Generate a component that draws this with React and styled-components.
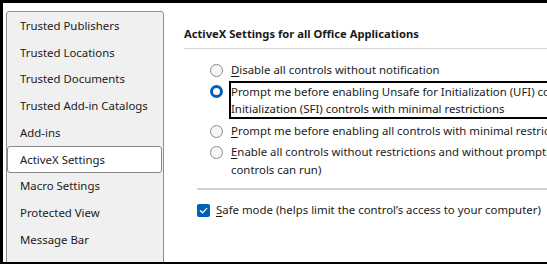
import styled, { createGlobalStyle } from "styled-components";

const GlobalStyle = createGlobalStyle`
  html, body {
    margin: 0;
    padding: 0;
    background: #000;
  }
  body {
    font-family: "Noto Sans", "Open Sans", sans-serif;
    color: #1a1a1a;
  }
`;

const navItems = [
  "Trusted Publishers",
  "Trusted Locations",
  "Trusted Documents",
  "Trusted Add-in Catalogs",
  "Add-ins",
  "ActiveX Settings",
  "Macro Settings",
  "Protected View",
  "Message Bar",
];

const options = [
  { key: "D", rest: "isable all controls without notification" },
  {
    lines: [
      "Prompt me before enabling Unsafe for Initialization (UFI) controls and Safe for",
      "Initialization (SFI) controls with minimal restrictions",
    ],
    checked: true,
  },
  { key: "P", rest: "rompt me before enabling all controls with minimal restrictions" },
  {
    key: "E",
    rest: "nable all controls without restrictions and without prompting (not recommended; potentially dangerous",
    tail: "controls can run)",
  },
];

function App() {
  return (
    <>
      <GlobalStyle />
      <Frame>
        <Window>
          <Sidebar>
            {navItems.map((item) => (
              <NavItem key={item} $active={item === "ActiveX Settings"}>
                {item}
              </NavItem>
            ))}
          </Sidebar>
          <Content>
            <Heading>ActiveX Settings for all Office Applications</Heading>
            <Rule />
            <OptionList>
              {options.map((opt, i) => (
                <Option key={i}>
                  <Radio $checked={opt.checked} />
                  {opt.lines ? (
                    <FocusLabel>
                      {opt.lines[0]}
                      <br />
                      {opt.lines[1]}
                    </FocusLabel>
                  ) : (
                    <Label>
                      <u>{opt.key}</u>
                      {opt.rest}
                      {opt.tail && (
                        <>
                          <br />
                          {opt.tail}
                        </>
                      )}
                    </Label>
                  )}
                </Option>
              ))}
            </OptionList>
            <Divider />
            <CheckRow>
              <Checkbox>
                <svg width="9" height="9" viewBox="0 0 10 10">
                  <path
                    d="M1.5 5.2 L4 7.5 L8.6 2.6"
                    fill="none"
                    stroke="#fff"
                    strokeWidth="1.4"
                    strokeLinecap="round"
                    strokeLinejoin="round"
                  />
                </svg>
              </Checkbox>
              <Label>
                <u>S</u>afe mode (helps limit the control’s access to your computer)
              </Label>
            </CheckRow>
          </Content>
        </Window>
      </Frame>
    </>
  );
}

const Frame = styled.div`
  padding: 3px 0 2px 3px;
  height: 264px;
  box-sizing: border-box;
`;

const Window = styled.div`
  display: flex;
  height: 259px;
  background: #fff;
  overflow: hidden;
`;

const Sidebar = styled.nav`
  flex: 0 0 156px;
  margin: 8px 0 0 3px;
  height: 280px;
  background: #f0f0f0;
  border: 1px solid #8f8f8f;
  border-radius: 3px;
  display: flex;
  flex-direction: column;
`;

const NavItem = styled.div`
  height: 26.75px;
  flex: 0 0 auto;
  box-sizing: border-box;
  display: flex;
  align-items: center;
  padding-left: 12px;
  font-size: 11.4px;
  white-space: nowrap;
  margin-right: 1px;
  border: 1px solid ${(p) => (p.$active ? "#8a8a8a" : "transparent")};
  border-radius: 3px;
  background: ${(p) => (p.$active ? "#fff" : "transparent")};
`;

const Content = styled.main`
  flex: 1;
  min-width: 0;
  padding: 22px 0 0 20px;
  overflow: hidden;
`;

const Heading = styled.h2`
  margin: 0;
  font-size: 11.2px;
  font-weight: 700;
  line-height: 18px;
  white-space: nowrap;
`;

const Rule = styled.div`
  height: 1px;
  background: #d6d6d6;
  margin-top: 5px;
`;

const OptionList = styled.div`
  display: flex;
  flex-direction: column;
  gap: 3px;
  margin: 12px 0 0 26px;
`;

const Option = styled.div`
  display: flex;
  align-items: flex-start;
  gap: 8px;
`;

const Radio = styled.span`
  flex: 0 0 auto;
  width: 13px;
  height: 13px;
  box-sizing: border-box;
  border-radius: 50%;
  margin-top: 3px;
  border: ${(p) => (p.$checked ? "3.5px solid #005fb8" : "1px solid #8a8a8a")};
  background: ${(p) => (p.$checked ? "#fff" : "#f6f6f6")};
`;

const Label = styled.span`
  font-size: 11.4px;
  line-height: 18px;
  white-space: nowrap;
  u {
    text-underline-offset: 2px;
  }
`;

const FocusLabel = styled(Label)`
  border: 2px solid #000;
  padding: 0 1px 0 0;
  margin-left: -2px;
  margin-top: -1px;
  line-height: 17px;
`;

const Divider = styled.div`
  height: 2px;
  background: #d4d4d4;
  margin: 9px 0 0 13px;
`;

const CheckRow = styled.div`
  display: flex;
  align-items: center;
  gap: 6px;
  margin: 11px 0 0 13px;
`;

const Checkbox = styled.span`
  flex: 0 0 auto;
  width: 13px;
  height: 13px;
  border-radius: 2px;
  background: #005fb8;
  display: flex;
  align-items: center;
  justify-content: center;
`;

export default App;
